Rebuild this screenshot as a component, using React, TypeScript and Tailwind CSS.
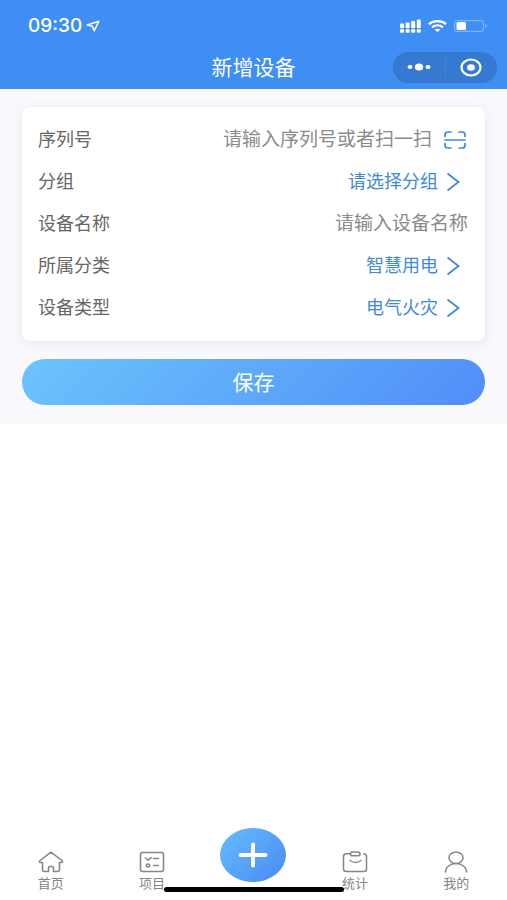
import type { ReactNode } from "react";

function StatusBar() {
  return (
    <div className="flex h-[51px] items-center justify-between pl-7 pr-5">
      <div className="flex items-center gap-1">
        <span className="font-[Inter,sans-serif] text-[19px] font-medium leading-6">
          09:30
        </span>
        <svg width="14" height="12" viewBox="0 0 14 12" fill="none">
          <path
            d="M12.8 1.2 1.2 5l5.2 1.200 1.900 4.600z"
            stroke="currentColor"
            strokeWidth="1.500"
            strokeLinejoin="round"
          />
        </svg>
      </div>
      <div className="flex items-center gap-[7px]">
        <svg width="21" height="14" viewBox="0 0 21 14" fill="currentColor">
          <rect x="0" y="4.500" width="4" height="4.700" rx="1" />
          <rect x="5.600" y="3.500" width="4" height="5.700" rx="1" />
          <rect x="11.200" y="2" width="4" height="7.200" rx="1" />
          <rect x="16.800" y="0.500" width="4" height="8.700" rx="1" />
          <rect x="0" y="10.200" width="4" height="3.500" rx="1" />
          <rect x="5.600" y="10.200" width="4" height="3.500" rx="1" />
          <rect x="11.200" y="10.200" width="4" height="3.500" rx="1" />
          <rect x="16.800" y="10.200" width="4" height="3.500" rx="1" />
        </svg>
        <svg
          width="19"
          height="12"
          viewBox="0 0 19 12"
          fill="none"
          stroke="currentColor"
          strokeWidth="2.200"
        >
          <path d="M.9 4.100c4.900-4 12.300-4 17.200 0" />
          <path d="M4 7.300c3.200-2.500 7.800-2.500 11 0" />
          <path d="M6.500 9.600 9.500 12l3-2.400c-1.800-1.300-4.200-1.300-6 0z" fill="currentColor" stroke="none" />
        </svg>
        <svg width="33" height="12" viewBox="0 0 33 12" fill="none">
          <rect x="0.600" y="0.600" width="28.800" height="10.800" rx="2.600" stroke="#7ab8f8" strokeWidth="1.200" />
          <path d="M31 4v4c1-.3 1.600-1.100 1.600-2S32 4.300 31 4z" fill="#7ab8f8" />
          <rect x="2.500" y="2" width="9.500" height="8" rx="1.500" fill="#fff" />
        </svg>
      </div>
    </div>
  );
}

function Header() {
  return (
    <header className="h-[89px] bg-[#3f8ef3] text-white">
      <StatusBar />
      <div className="grid h-8 grid-cols-[1fr_auto_1fr] items-center pr-[10px]">
        <h1 className="col-start-2 pb-[2px] pl-[10px] text-[21px] leading-7">新增设备</h1>
        <div className="flex h-[31px] w-[104px] items-center justify-self-end rounded-full bg-[#3579d0]">
          <button type="button" aria-label="更多" className="flex flex-1 justify-center">
            <svg width="24" height="8" viewBox="0 0 24 8" fill="currentColor">
              <ellipse cx="3" cy="4" rx="2.500" ry="2" />
              <ellipse cx="12" cy="4" rx="4.200" ry="3.600" />
              <ellipse cx="21" cy="4" rx="2.500" ry="2" />
            </svg>
          </button>
          <span className="h-5 w-px bg-[#4384da]" />
          <button type="button" aria-label="关闭" className="flex flex-1 justify-center">
            <svg width="22" height="19" viewBox="0 0 22 19">
              <ellipse cx="11" cy="9.500" rx="9.500" ry="8" fill="none" stroke="currentColor" strokeWidth="2.200" />
              <ellipse cx="11" cy="9.500" rx="3.900" ry="3.300" fill="currentColor" />
            </svg>
          </button>
        </div>
      </div>
    </header>
  );
}

function Row({ id, label, children }: { id: string; label: string; children: ReactNode }) {
  return (
    <div className="flex h-[42px] items-center">
      <label htmlFor={id} className="shrink-0 text-lg leading-6 text-[#666]">
        {label}
      </label>
      {children}
    </div>
  );
}

function TextField({ id, placeholder }: { id: string; placeholder: string }) {
  return (
    <input
      id={id}
      type="text"
      placeholder={placeholder}
      className="min-w-0 flex-1 bg-transparent text-right text-[19px] leading-6 text-[#666] outline-none placeholder:text-[#8a8a8a]"
    />
  );
}

function SelectRow({ id, label, value }: { id: string; label: string; value: string }) {
  return (
    <Row id={id} label={label}>
      <select
        id={id}
        className="min-w-0 flex-1 appearance-none bg-transparent text-right text-lg leading-6 text-[#4089d6] outline-none [text-align-last:right]"
      >
        <option>{value}</option>
      </select>
      <svg className="ml-2 mr-2 mt-1 shrink-0" width="14" height="20" viewBox="0 0 14 20" fill="none">
        <path d="M1.500 1.500 12.500 10l-11 8.500" stroke="#4089d6" strokeWidth="1.800" />
      </svg>
    </Row>
  );
}

function DeviceForm() {
  return (
    <form className="bg-[#f8f8fd] px-[22px] pb-[19px] pt-[18px]">
      <div className="rounded-lg bg-white pb-[14px] pl-4 pr-[17px] pt-[10px] shadow-[0_2px_12px_rgba(0,0,0,0.08)]">
        <Row id="serial" label="序列号">
          <TextField id="serial" placeholder="请输入序列号或者扫一扫" />
          <button type="button" aria-label="扫一扫" className="ml-3 mr-[2px] mt-1 shrink-0">
            <svg
              width="22"
              height="18"
              viewBox="0 0 22 18"
              fill="none"
              stroke="#4089d6"
              strokeWidth="1.700"
              strokeLinecap="round"
            >
              <path d="M1 5.500V3.500Q1 1 4 1h3M15 1h3q3 0 3 2.500v2M21 12.500v2q0 2.500-3 2.500h-3M7 17H4q-3 0-3-2.500v-2M1 9h20" />
            </svg>
          </button>
        </Row>
        <SelectRow id="group" label="分组" value="请选择分组" />
        <Row id="name" label="设备名称">
          <TextField id="name" placeholder="请输入设备名称" />
        </Row>
        <SelectRow id="category" label="所属分类" value="智慧用电" />
        <SelectRow id="type" label="设备类型" value="电气火灾" />
      </div>
      <button
        type="button"
        className="mt-[18px] h-[46px] w-full rounded-full bg-linear-135 from-[#6cc4fb] to-[#518df8] pb-[2px] text-[21px] leading-6 text-white"
      >
        保存
      </button>
    </form>
  );
}

function Tab({ label, children }: { label: string; children: ReactNode }) {
  return (
    <a href="#" className="flex flex-col items-center gap-[2px] text-[#858585]">
      <svg
        width="26"
        height="22"
        viewBox="0 0 26 22"
        fill="none"
        stroke="currentColor"
        strokeWidth="1.500"
        strokeLinecap="round"
        strokeLinejoin="round"
      >
        {children}
      </svg>
      <span className="text-[13px] leading-4">{label}</span>
    </a>
  );
}

function TabBar() {
  return (
    <nav className="relative mt-auto grid grid-cols-5 items-end pb-[9px]">
      <Tab label="首页">
        <path d="M13 1.200 1.500 10Q1 11.200 2.200 11.500H4.500V18.500q0 2 2 2h4V17q0-1.500 1.500-1.500h2q1.500 0 1.500 1.500v3.500h4q2 0 2-2v-7h2.300q1.200-.3.700-1.500z" />
      </Tab>
      <Tab label="项目">
        <rect x="1.500" y="1.500" width="23" height="19" rx="2" />
        <path d="m6.500 7 2.500 2.200L12.500 6.500M14.500 7.500h5M14.500 14.500h5" />
        <ellipse cx="9" cy="14.500" rx="1.800" ry="1.500" />
      </Tab>
      <button
        type="button"
        aria-label="新增"
        className="mb-[9px] flex h-[54px] w-[66px] items-center justify-center justify-self-center rounded-[50%] bg-linear-135 from-[#66bdf9] to-[#4b89f6]"
      >
        <svg width="30" height="26" viewBox="0 0 30 26" stroke="#fff" strokeWidth="4" strokeLinecap="round">
          <path d="M2.500 13h25M15 2.500v21" />
        </svg>
      </button>
      <Tab label="统计">
        <path d="M8 2.800H4.500q-3 0-3 2.700V18q0 2.500 3 2.500h17q3 0 3-2.500V5.500q0-2.200-2.500-2.700" />
        <rect x="8.500" y="1" width="9.500" height="3.800" rx="1.900" />
        <path d="M8 9.500q5.500 4 11 0" />
      </Tab>
      <Tab label="我的">
        <ellipse cx="13" cy="6.800" rx="7" ry="5.800" />
        <path d="M2.500 21c0-4.800 4.500-8.400 10.500-8.400s10.500 3.600 10.500 8.400" />
      </Tab>
      <div className="absolute bottom-2 left-1/2 h-[5px] w-[180px] -translate-x-1/2 rounded-full bg-black" />
    </nav>
  );
}

export default function App() {
  return (
    <div className="flex min-h-screen flex-col bg-white font-['Noto_Sans_CJK_SC',sans-serif]">
      <Header />
      <DeviceForm />
      <TabBar />
    </div>
  );
}
